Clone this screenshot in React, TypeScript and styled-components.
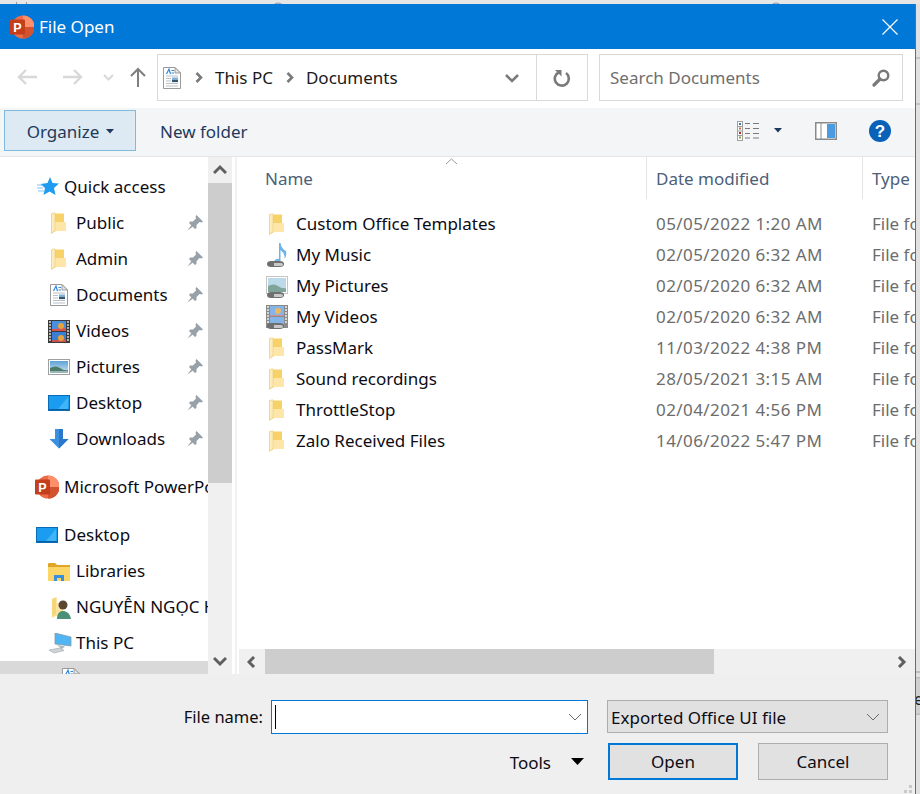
import React from "react";
import styled, { createGlobalStyle } from "styled-components";

const Global = createGlobalStyle`
  html, body { margin: 0; padding: 0; background: #e3e3e3; }
  * { box-sizing: border-box; }
  body { font-family: "Noto Sans", "Open Sans", sans-serif; font-size: 17px; color: #0c0c14; }
`;

const Page = styled.div`
  width: 920px; height: 794px; overflow: hidden; display: flex; flex-direction: column;
  background: #e3e3e3;
`;
const BackdropTop = styled.div`height: 4px; flex: none; line-height: 0; background: #e6e6e6;`;
const Body = styled.div`flex: 1; display: flex; min-height: 0;`;
const Win = styled.div`
  width: 916px; flex: none; display: flex; flex-direction: column; position: relative;
  background: #fff; border-right: 1px solid #2a7ac4;
`;
const BackdropRight = styled.div`flex: 1; line-height: 0; background: #e1e1e1;`;
const Gap = styled.span<{ $w: number }>`width: ${(p) => p.$w}px; flex: none;`;

const TitleBar = styled.div`
  height: 45px; flex: none; background: #0078d7; color: #fff; display: flex; align-items: center;
  padding: 0 17px 0 10px;
`;
const TitleText = styled.span`margin-left: 5px; font-size: 17px; flex: 1;`;

const NavBar = styled.div`
  height: 59px; flex: none; background: #fff; display: flex; align-items: flex-start; padding-top: 5px;
`;
const NavButtons = styled.div`
  width: 157px; height: 46px; flex: none; display: flex; align-items: center; padding-left: 17px;
`;
const AddressBox = styled.div`
  width: 431px; height: 47px; flex: none; border: 1px solid #d9d9d9; display: flex; align-items: center;
  padding-left: 5px;
`;
const Crumb = styled.span`margin: 0 13px 0 12px; font-size: 17px; color: #1a1a1a;`;
const AddressSpacer = styled.div`flex: 1;`;
const AddressDrop = styled.div`
  width: 32px; height: 100%; display: flex; align-items: center; justify-content: flex-start;
  border-right: 1px solid #d9d9d9;
`;
const Refresh = styled.div`width: 50px; height: 100%; display: flex; align-items: center; justify-content: center;`;
const SearchBox = styled.div`
  width: 304px; height: 47px; margin-left: 11px; flex: none; border: 1px solid #d9d9d9; display: flex;
  align-items: center; justify-content: space-between; padding: 0 12px 0 10px; color: #6f6f6f;
  font-size: 17px;
`;

const Toolbar = styled.div`
  height: 49px; flex: none; background: #f4f5f7; border-bottom: 1px solid #e6e6e6; display: flex;
  align-items: center; padding: 0 24px 3px 4px;
`;
const Organize = styled.div`
  width: 132px; height: 41px; flex: none; background: #dde9f3; border: 1px solid #7fbade; color: #1e395b;
  display: flex; align-items: center; justify-content: center; gap: 7px; font-size: 17px; padding: 2px 0 0 1px;
`;
const ToolText = styled.span`margin-left: 24px; padding-top: 2px; color: #1e395b; font-size: 17px; flex: 1;`;
const ToolIcons = styled.div`display: flex; align-items: center;`;

const Main = styled.div`flex: 1; display: flex; min-height: 0; overflow: hidden;`;
const Sidebar = styled.nav`width: 208px; flex: none; padding-top: 12px; overflow: hidden;`;
const TreeRow = styled.div<{ $indent: number; $gapBefore?: boolean; $selected?: boolean }>`
  width: 208px; height: 36px; display: flex; align-items: center; white-space: nowrap; overflow: hidden;
  padding-left: ${(p) => p.$indent}px;
  margin-top: ${(p) => (p.$gapBefore ? 12 : 0)}px;
  background: ${(p) => (p.$selected ? "#d9d9d9" : "transparent")};
`;
const TreeIcon = styled.span<{ $w: number }>`
  width: ${(p) => p.$w}px; flex: none; display: flex; align-items: center; line-height: 0;
`;
const TreeLabel = styled.span<{ $low?: boolean }>`
  flex: 1; min-width: 0; overflow: hidden; font-size: 17px;
  padding-top: ${(p) => (p.$low ? 5 : 0)}px;
  padding-bottom: ${(p) => (p.$low ? 0 : 1)}px;
`;
const PinSlot = styled.span`width: 21px; flex: none; line-height: 0;`;

const VScroll = styled.div`
  width: 24px; flex: none; background: #f0f0f0; display: flex; flex-direction: column; height: 517px;
`;
const ScrollBtn = styled.div`
  width: 24px; height: 26px; flex: none; display: flex; align-items: center; justify-content: center;
`;
const VThumb = styled.div`height: 300px; flex: none; background: #cdcdcd;`;
const VTrack = styled.div`flex: 1;`;
const Divider = styled.div`
  width: 7px; flex: none; height: 517px; background: #fff; padding: 0 2px 0 3px;
  &::after { content: ""; display: block; width: 2px; height: 100%; background: #f1f1f1; }
`;

const Content = styled.section`flex: 1; min-width: 0; display: flex; flex-direction: column; overflow: hidden;`;
const Header = styled.div`height: 42px; flex: none; display: flex; position: relative; color: #4c607a; font-size: 17px;`;
const HeadCell = styled.div<{ $w: number; $pad: number; $sep?: boolean }>`
  width: ${(p) => p.$w}px; flex: none; padding-left: ${(p) => p.$pad}px; display: flex; align-items: center;
  border-right: ${(p) => (p.$sep ? "1px solid #e5e5e5" : "none")}; white-space: nowrap;
`;
const SortMark = styled.span`position: absolute; left: 206px; top: 0; line-height: 0;`;
const FileList = styled.div`flex: 1; padding-top: 9px; min-height: 0; overflow: hidden;`;
const FileRow = styled.div`
  height: 31px; display: flex; align-items: center; white-space: nowrap; padding-left: 26px;
`;
const FileIcon = styled.span<{ $inset: number }>`
  width: 31px; flex: none; line-height: 0; display: flex; align-items: center; padding-left: ${(p) => p.$inset}px;
`;
const FileName = styled.span`width: 360px; flex: none; font-size: 17px;`;
const FileDate = styled.span`width: 216px; flex: none; color: #6d6d6d; font-size: 17px; letter-spacing: 0.42px;`;
const FileType = styled.span`color: #6d6d6d; font-size: 17px;`;
const HScroll = styled.div`height: 25px; flex: none; background: #f0f0f0; display: flex; align-items: center;`;
const HBtn = styled.div`width: 26px; height: 25px; flex: none; display: flex; align-items: center; justify-content: center;`;
const HThumb = styled.div`width: 449px; height: 25px; flex: none; background: #cdcdcd;`;
const HTrack = styled.div`flex: 1;`;

const Footer = styled.div`
  height: 120px; flex: none; background: #efefef; display: flex; flex-direction: column; align-items: flex-end;
  padding: 26px 27px 0 0; position: relative;
`;
const FormRow = styled.div`display: flex; align-items: flex-start;`;
const NameLabel = styled.span`height: 34px; line-height: 34px; margin-right: 8px; font-size: 16.5px;`;
const NameInput = styled.div`
  width: 317px; height: 34px; background: #fff; border: 1px solid #0078d7; display: flex; align-items: center;
  justify-content: space-between; padding: 0 5px 0 3px;
`;
const Caret = styled.span`width: 1px; height: 24px; background: #000;`;
const TypeSelect = styled.div`
  width: 281px; height: 33px; margin-left: 19px; background: #e1e1e1; border: 1px solid #adadad; display: flex;
  align-items: center; justify-content: space-between; padding: 1px 7px 0 3px; font-size: 17px;
`;
const ButtonRow = styled.div`display: flex; align-items: center; margin-top: 9px;`;
const Tools = styled.span`font-size: 17px; padding-top: 1px;`;
const ToolsCaret = styled.span`margin: 0 24px 0 20px; width: 13px; line-height: 0;`;
const DialogButton = styled.div<{ $primary?: boolean }>`
  width: 130px; height: 37px; background: #e1e1e1; display: flex; align-items: center; justify-content: center;
  border: ${(p) => (p.$primary ? "2px solid #0078d7" : "1px solid #adadad")}; font-size: 17px;
  & + & { margin-left: 20px; }
`;
const Grip = styled.span`position: absolute; right: 3px; bottom: 1px; line-height: 0;`;

const PptIcon = ({ s = 24 }: { s?: number }) => (
  <svg width={s} height={s} viewBox="0 0 24 24">
    <circle cx="13" cy="12" r="11.5" fill="#ed6c47" />
    <path d="M13 12h11.5A11.5 11.5 0 0 1 13 23.5z" fill="#d35230" />
    <path d="M13 .5A11.5 11.5 0 0 1 24.5 12H13z" fill="#ff8f6b" />
    <rect x="0" y="4.5" width="15" height="15" rx="1" fill="#c43e1c" />
    <text x="7.5" y="16.5" textAnchor="middle" fontFamily="Liberation Sans, sans-serif" fontWeight="700" fontSize="12.5" fill="#fff">P</text>
  </svg>
);

const Folder = () => (
  <svg width="15" height="22" viewBox="0 0 15 22">
    <path d="M.5 1.5H13V10H14.5V19H5L.5 21.5z" fill="#f7d268" />
    <path d="M4 10H14.5V19H4z" fill="#fde6a8" />
    <path d="M.5 1.5L4 .8V18.5L.5 21.5z" fill="#fcebbd" />
    <path d="M.5 1.5L4 .8V18.5L.5 21.5z" fill="none" stroke="#e8c468" strokeWidth=".5" />
  </svg>
);

const DocIcon = ({ s = 18 }: { s?: number }) => (
  <svg width={s} height={(s * 22) / 18} viewBox="0 0 18 22">
    <path d="M.5.5H12L17.5 6V21.5H.5z" fill="#fff" stroke="#9a9a9a" />
    <path d="M12 .5V6H17.5z" fill="#e4e4e4" stroke="#9a9a9a" />
    <path d="M3.5 7 L6 2 L7.5 7" fill="none" stroke="#2f86dc" strokeWidth="1.2" />
    <path d="M8.5 3.5H11M8.5 6H11" stroke="#2f86dc" />
    <path d="M3 9H15M3 11.5H8M3 14H8M3 16.5H15M3 19H15" stroke="#a8b0b8" strokeWidth=".8" />
    <rect x="9" y="10.5" width="6" height="2.4" fill="#7fb0d8" />
    <rect x="9" y="12.9" width="6" height="2.2" fill="#35566f" />
  </svg>
);

const Film = () => (
  <svg width="22" height="23" viewBox="0 0 22 23">
    <rect width="22" height="23" fill="#3a3a3a" />
    <rect x="4" y="1" width="14" height="10" fill="#4a90e2" />
    <rect x="4" y="12" width="14" height="10" fill="#3b7fd4" />
    <path d="M4 9h6l2-3 6 3v2H4z" fill="#d9534f" />
    <circle cx="13" cy="6" r="3" fill="#e8a33b" />
    <path d="M4 20h6l2-3 6 3v2H4z" fill="#c9534f" />
    <circle cx="13" cy="18" r="3" fill="#e8a33b" />
    <path d="M1 2h2M1 5h2M1 8h2M1 11h2M1 14h2M1 17h2M1 20h2M19 2h2M19 5h2M19 8h2M19 11h2M19 14h2M19 17h2M19 20h2" stroke="#ddd" strokeWidth="1.4" />
  </svg>
);

const Picture = () => (
  <svg width="22" height="16" viewBox="0 0 22 16">
    <defs>
      <linearGradient id="sky" x1="0" y1="0" x2="0" y2="1">
        <stop offset="0" stopColor="#5da3d8" />
        <stop offset="1" stopColor="#cfe2ee" />
      </linearGradient>
    </defs>
    <rect x=".5" y=".5" width="21" height="15" fill="#fff" stroke="#a0a0a0" />
    <rect x="2" y="2" width="18" height="12" fill="url(#sky)" />
    <path d="M2 9 Q8 6 12 9 T20 11V14H2z" fill="#4e7a6a" />
    <path d="M2 12H20V14H2z" fill="#9ab7b8" />
  </svg>
);

const Desktop = () => (
  <svg width="22" height="16" viewBox="0 0 22 16">
    <rect x=".5" y=".5" width="21" height="15" fill="#1a9cf0" stroke="#0b6bb5" />
    <path d="M10 14L20 2V14z" fill="#3fb4f7" />
    <path d="M1 14.5H21" stroke="#0a5f9e" />
  </svg>
);

const Download = () => (
  <svg width="20" height="20" viewBox="0 0 20 20">
    <path d="M6 0H14V10H19.5L10 19.5 .5 10H6z" fill="#3a8fe0" />
    <path d="M10 0H14V10H19.5L10 19.5z" fill="#2a78cc" />
  </svg>
);

const Star = () => (
  <svg width="22" height="20" viewBox="0 0 22 20">
    <path d="M13 0 L15.5 6 L22 6.5 L17 11 L18.5 18 L12.5 14.5 L6.5 18 L8 11 L3.5 7 L10.5 6z" fill="#1f9cf0" />
    <path d="M0 8H5M0 11H6M1 14H7" stroke="#7cc5f5" strokeWidth="1" />
  </svg>
);

const Pin = () => (
  <svg width="16" height="16" viewBox="0 0 16 16">
    <path d="M9.5 0L16 6.5 14.5 7.5 12.5 7 9.5 10 9.5 13 8 14 2 8 3 6.5 6 6.5 9 3.5 8.5 1.5z" fill="#98a0a8" />
    <path d="M4.5 10L.5 15.5 6 11.5z" fill="#98a0a8" />
  </svg>
);

const Libraries = () => (
  <svg width="22" height="19" viewBox="0 0 22 19">
    <path d="M0 2a1 1 0 0 1 1-1h6l2 2h13v3H0z" fill="#e0a526" />
    <path d="M0 5h22v14H0z" fill="#fcd667" />
    <path d="M6 19v-6h10v6h-3v-3H9v3z" fill="#3a8fdc" />
  </svg>
);

const UserFolder = () => (
  <svg width="20" height="23" viewBox="0 0 20 23">
    <path d="M1 3L6 1V7H12V20H5L1 22z" fill="#fbe3a0" />
    <path d="M1 3L5 1.5V18L1 21z" fill="#f6d67a" />
    <circle cx="12" cy="9" r="4.5" fill="#5a4632" />
    <path d="M6 23c0-6 3-8 6-8s7 2 8 8z" fill="#4a9178" />
  </svg>
);

const Pc = () => (
  <svg width="24" height="21" viewBox="0 0 24 21">
    <path d="M7 0L23 4V13L7 11z" fill="#4fb5f3" stroke="#8a9aa8" strokeWidth=".8" />
    <path d="M9 12L17 13.5 14 16z" fill="#aab4bc" />
    <path d="M1 17L12 15 16 17.5 6 20z" fill="#cfd4d8" stroke="#9aa2a8" strokeWidth=".6" />
  </svg>
);

const LinkBadge = () => (
  <g>
    <path d="M1 22q0-3 4-3h9q3 0 4 2v2q-1 2-4 2H5q-4 0-4-3z" fill="#6f6f6f" />
    <path d="M8 21h7q2 0 2 1.5T15 24H8z" fill="#c8c8c8" />
  </g>
);

const Music = () => (
  <svg width="22" height="26" viewBox="0 0 22 26">
    <path d="M13 1h1.5q1 6 5.5 8 1 5-1.5 8 1-5-4-9V18q0 3-4 4l-2-1q-1-3 2-4 1.5-.6 2.5 0z" fill="#6fb4e8" />
    <LinkBadge />
  </svg>
);

const ShortcutPicture = () => (
  <svg width="22" height="26" viewBox="0 0 22 26">
    <rect x=".5" y="3.5" width="21" height="17" fill="#fff" stroke="#c4c4c4" />
    <rect x="2" y="5" width="18" height="14" fill="#bcd9ea" />
    <path d="M2 13 Q8 10 12 13 T20 15V19H2z" fill="#7fa59a" />
    <LinkBadge />
  </svg>
);

const ShortcutVideo = () => (
  <svg width="22" height="26" viewBox="0 0 22 26">
    <rect y="1" width="22" height="23" fill="#8a8a8a" />
    <rect x="4" y="2" width="14" height="10" fill="#84b5e6" />
    <rect x="4" y="13" width="14" height="10" fill="#84b5e6" />
    <circle cx="12" cy="7" r="3" fill="#e8b96a" />
    <path d="M4 11h14v1H4z" fill="#d98f8f" />
    <path d="M1 3h2M1 6h2M1 9h2M1 12h2M1 15h2M1 18h2M19 3h2M19 6h2M19 9h2M19 12h2M19 15h2M19 18h2" stroke="#eee" strokeWidth="1.3" />
    <LinkBadge />
  </svg>
);

const Chevron = ({ d, w = 12, h = 12, stroke = "#5f5f5f", sw = 3 }: { d: string; w?: number; h?: number; stroke?: string; sw?: number }) => (
  <svg width={w} height={h} viewBox={`0 0 ${w} ${h}`}>
    <path d={d} fill="none" stroke={stroke} strokeWidth={sw} />
  </svg>
);

const ArrowLeft = ({ color }: { color: string }) => (
  <svg width="20" height="16" viewBox="0 0 20 16">
    <path d="M20 8H2M9 1L2 8l7 7" fill="none" stroke={color} strokeWidth="2.4" />
  </svg>
);
const ArrowRight = ({ color }: { color: string }) => (
  <svg width="20" height="16" viewBox="0 0 20 16">
    <path d="M0 8H18M11 1l7 7-7 7" fill="none" stroke={color} strokeWidth="2.4" />
  </svg>
);

const Views = () => (
  <svg width="22" height="20" viewBox="0 0 22 20">
    <rect x=".5" y=".5" width="5" height="19" fill="#fff" stroke="#a0a0a0" />
    <path d="M0 5.5H6M0 10H6M0 14.5H6" stroke="#a0a0a0" />
    <rect x="2" y="2" width="2" height="2" fill="#3a78b5" />
    <rect x="2" y="6.5" width="2" height="2" fill="#b5793a" />
    <rect x="2" y="11" width="2" height="2" fill="#c8281e" />
    <rect x="2" y="15.5" width="2" height="2" fill="#7aa83a" />
    <path d="M8 2.5H13M16 2.5H22M8 7.5H13M16 7.5H22M8 12.5H13M16 12.5H22M8 17H13M16 17H22" stroke="#7a7a7a" />
  </svg>
);
const PreviewPane = () => (
  <svg width="22" height="18" viewBox="0 0 22 18">
    <rect x=".75" y=".75" width="20.5" height="16.5" fill="#fff" stroke="#8a8a8a" strokeWidth="1.5" />
    <rect x="12" y="2" width="8" height="14" fill="#4a9be0" />
    <path d="M6 1V17" stroke="#8a8a8a" />
  </svg>
);
const Help = () => (
  <svg width="22" height="22" viewBox="0 0 22 22">
    <circle cx="11" cy="11" r="11" fill="#0a62b8" />
    <text x="11" y="17" textAnchor="middle" fontFamily="Liberation Sans, sans-serif" fontWeight="700" fontSize="17" fill="#fff">?</text>
  </svg>
);

type Tree = { label: string; icon: React.ReactNode; iw: number; indent: number; pin?: boolean; gap?: boolean; sel?: boolean };
const tree: Tree[] = [
  { label: "Quick access", icon: <Star />, iw: 27, indent: 37 },
  { label: "Public", icon: <Folder />, iw: 25, indent: 51, pin: true },
  { label: "Admin", icon: <Folder />, iw: 25, indent: 51, pin: true },
  { label: "Documents", icon: <DocIcon />, iw: 26, indent: 50, pin: true },
  { label: "Videos", icon: <Film />, iw: 28, indent: 48, pin: true },
  { label: "Pictures", icon: <Picture />, iw: 28, indent: 48, pin: true },
  { label: "Desktop", icon: <Desktop />, iw: 28, indent: 48, pin: true },
  { label: "Downloads", icon: <Download />, iw: 27, indent: 49, pin: true },
  { label: "Microsoft PowerPoint", icon: <PptIcon />, iw: 29, indent: 35, gap: true },
  { label: "Desktop", icon: <Desktop />, iw: 28, indent: 36, gap: true },
  { label: "Libraries", icon: <Libraries />, iw: 28, indent: 48 },
  { label: "NGUYỄN NGỌC H", icon: <UserFolder />, iw: 25, indent: 51 },
  { label: "This PC", icon: <Pc />, iw: 28, indent: 48 },
  { label: "Documents", icon: <DocIcon />, iw: 27, indent: 62, sel: true },
];

const files: { name: string; date: string; icon: React.ReactNode; inset: number }[] = [
  { name: "Custom Office Templates", date: "05/05/2022 1:20 AM", icon: <Folder />, inset: 4 },
  { name: "My Music", date: "02/05/2020 6:32 AM", icon: <Music />, inset: 1 },
  { name: "My Pictures", date: "02/05/2020 6:32 AM", icon: <ShortcutPicture />, inset: 1 },
  { name: "My Videos", date: "02/05/2020 6:32 AM", icon: <ShortcutVideo />, inset: 1 },
  { name: "PassMark", date: "11/03/2022 4:38 PM", icon: <Folder />, inset: 4 },
  { name: "Sound recordings", date: "28/05/2021 3:15 AM", icon: <Folder />, inset: 4 },
  { name: "ThrottleStop", date: "02/04/2021 4:56 PM", icon: <Folder />, inset: 4 },
  { name: "Zalo Received Files", date: "14/06/2022 5:47 PM", icon: <Folder />, inset: 4 },
];

export default function App() {
  return (
    <Page>
      <Global />
      <BackdropTop>
        <svg width="920" height="4" viewBox="0 0 920 4">
          <path d="M16.5 0V4M26.5 0V4" stroke="#9a9a9a" />
          <path d="M79 3h2v1h-2zM209 3h2v1h-2zM229 2h3v2h-3zM678 2h2v2h-2z" fill="#555" />
          <circle cx="278" cy="7" r="6" fill="none" stroke="#8a9ab0" />
          <circle cx="776" cy="7" r="6" fill="none" stroke="#8a9ab0" />
        </svg>
      </BackdropTop>
      <Body>
        <Win>
          <TitleBar>
            <PptIcon />
            <TitleText>File Open</TitleText>
            <svg width="16" height="16" viewBox="0 0 16 16">
              <path d="M.5.5L15.5 15.5M15.5.5L.5 15.5" stroke="#fff" strokeWidth="1.2" />
            </svg>
          </TitleBar>
          <NavBar>
            <NavButtons>
              <ArrowLeft color="#d8d8d8" />
              <Gap $w={26} />
              <ArrowRight color="#d8d8d8" />
              <Gap $w={20} />
              <Chevron d="M1 3l4.5 4.5L10 3" w={11} h={10} stroke="#d8d8d8" sw={2} />
              <Gap $w={16} />
              <svg width="16" height="20" viewBox="0 0 16 20">
                <path d="M8 20V2M1 9l7-7 7 7" fill="none" stroke="#7f7f7f" strokeWidth="2" />
              </svg>
            </NavButtons>
            <AddressBox>
              <DocIcon />
              <Gap $w={14} />
              <Chevron d="M1.5 1l4.5 4.5L1.5 10" w={8} h={11} stroke="#7a7a7a" sw={2.6} />
              <Crumb>This PC</Crumb>
              <Chevron d="M1.5 1l4.5 4.5L1.5 10" w={8} h={11} stroke="#7a7a7a" sw={2.6} />
              <Crumb>Documents</Crumb>
              <AddressSpacer />
              <AddressDrop>
                <Chevron d="M1 2l6 6 6-6" w={14} h={10} stroke="#7a7a7a" sw={2.6} />
              </AddressDrop>
              <Refresh>
                <svg width="18" height="18" viewBox="0 0 18 18">
                  <path d="M6 3.2A7 7 0 1 0 13 4" fill="none" stroke="#7a7a7a" strokeWidth="2.6" />
                  <path d="M2 1h6.5v6.5z" fill="#7a7a7a" />
                </svg>
              </Refresh>
            </AddressBox>
            <SearchBox>
              <span>Search Documents</span>
              <svg width="18" height="18" viewBox="0 0 18 18">
                <circle cx="11.5" cy="6.5" r="4.8" fill="none" stroke="#7a7a7a" strokeWidth="2.4" />
                <path d="M8 10L2 16" stroke="#7a7a7a" strokeWidth="3.2" strokeLinecap="round" />
              </svg>
            </SearchBox>
          </NavBar>
          <Toolbar>
            <Organize>
              <span>Organize</span>
              <svg width="8" height="5" viewBox="0 0 8 5"><path d="M0 0h8L4 4.5z" fill="#1e395b" /></svg>
            </Organize>
            <ToolText>New folder</ToolText>
            <ToolIcons>
              <Views />
              <Gap $w={15} />
              <svg width="8" height="5" viewBox="0 0 8 5"><path d="M0 0h8L4 4.5z" fill="#1e395b" /></svg>
              <Gap $w={33} />
              <PreviewPane />
              <Gap $w={32} />
              <Help />
            </ToolIcons>
          </Toolbar>
          <Main>
            <Sidebar>
              {tree.map((t, i) => (
                <TreeRow key={i} $indent={t.indent} $gapBefore={t.gap} $selected={t.sel}>
                  <TreeIcon $w={t.iw}>{t.icon}</TreeIcon>
                  <TreeLabel $low={t.sel}>{t.label}</TreeLabel>
                  {t.pin && <PinSlot><Pin /></PinSlot>}
                </TreeRow>
              ))}
            </Sidebar>
            <VScroll>
              <ScrollBtn><Chevron d="M1 9l6-6 6 6" w={14} h={12} /></ScrollBtn>
              <VThumb />
              <VTrack />
              <ScrollBtn><Chevron d="M1 2l6 6 6-6" w={14} h={11} /></ScrollBtn>
            </VScroll>
            <Divider />
            <Content>
              <Header>
                <HeadCell $w={408} $pad={26} $sep>Name</HeadCell>
                <HeadCell $w={216} $pad={9} $sep>Date modified</HeadCell>
                <HeadCell $w={60} $pad={9}>Type</HeadCell>
                <SortMark>
                  <svg width="13" height="8" viewBox="0 0 13 8"><path d="M1 7l5.5-5 5.5 5" fill="none" stroke="#9a9a9a" /></svg>
                </SortMark>
              </Header>
              <FileList>
                {files.map((f) => (
                  <FileRow key={f.name}>
                    <FileIcon $inset={f.inset}>{f.icon}</FileIcon>
                    <FileName>{f.name}</FileName>
                    <FileDate>{f.date}</FileDate>
                    <FileType>File fo</FileType>
                  </FileRow>
                ))}
              </FileList>
              <HScroll>
                <HBtn><Chevron d="M7 1L2 6l5 5" w={11} h={12} /></HBtn>
                <HThumb />
                <HTrack />
                <HBtn><Chevron d="M2 1l5 5-5 5" w={11} h={12} /></HBtn>
              </HScroll>
            </Content>
          </Main>
          <Footer>
            <FormRow>
              <NameLabel>File name:</NameLabel>
              <NameInput>
                <Caret />
                <Chevron d="M1 1l6 6 6-6" w={14} h={9} stroke="#6a6a6a" sw={1} />
              </NameInput>
              <TypeSelect>
                <span>Exported Office UI file</span>
                <Chevron d="M1 1l6 6 6-6" w={14} h={9} stroke="#6a6a6a" sw={1} />
              </TypeSelect>
            </FormRow>
            <ButtonRow>
              <Tools>Tools</Tools>
              <ToolsCaret>
                <svg width="13" height="7" viewBox="0 0 13 7"><path d="M0 0h13L6.5 7z" fill="#000" /></svg>
              </ToolsCaret>
              <DialogButton $primary>Open</DialogButton>
              <DialogButton>Cancel</DialogButton>
            </ButtonRow>
            <Grip>
              <svg width="8" height="8" viewBox="0 0 8 8"><path d="M5 0h3v3H5zM0 5h3v3H0zM5 5h3v3H5z" fill="#c9c9c9" /></svg>
            </Grip>
          </Footer>
        </Win>
        <BackdropRight>
          <svg width="4" height="790" viewBox="0 0 4 790">
            <path d="M0 54H4M0 100H4" stroke="#a8a8a8" />
            <path d="M0 668H4M0 674H4M0 710H4" stroke="#9a9a9a" />
            <rect y="674.5" width="4" height="35" fill="#d0d0d0" />
            <text x="-2" y="701" fontSize="16" fontFamily="Noto Sans, sans-serif" fill="#222">e</text>
          </svg>
        </BackdropRight>
      </Body>
    </Page>
  );
}
